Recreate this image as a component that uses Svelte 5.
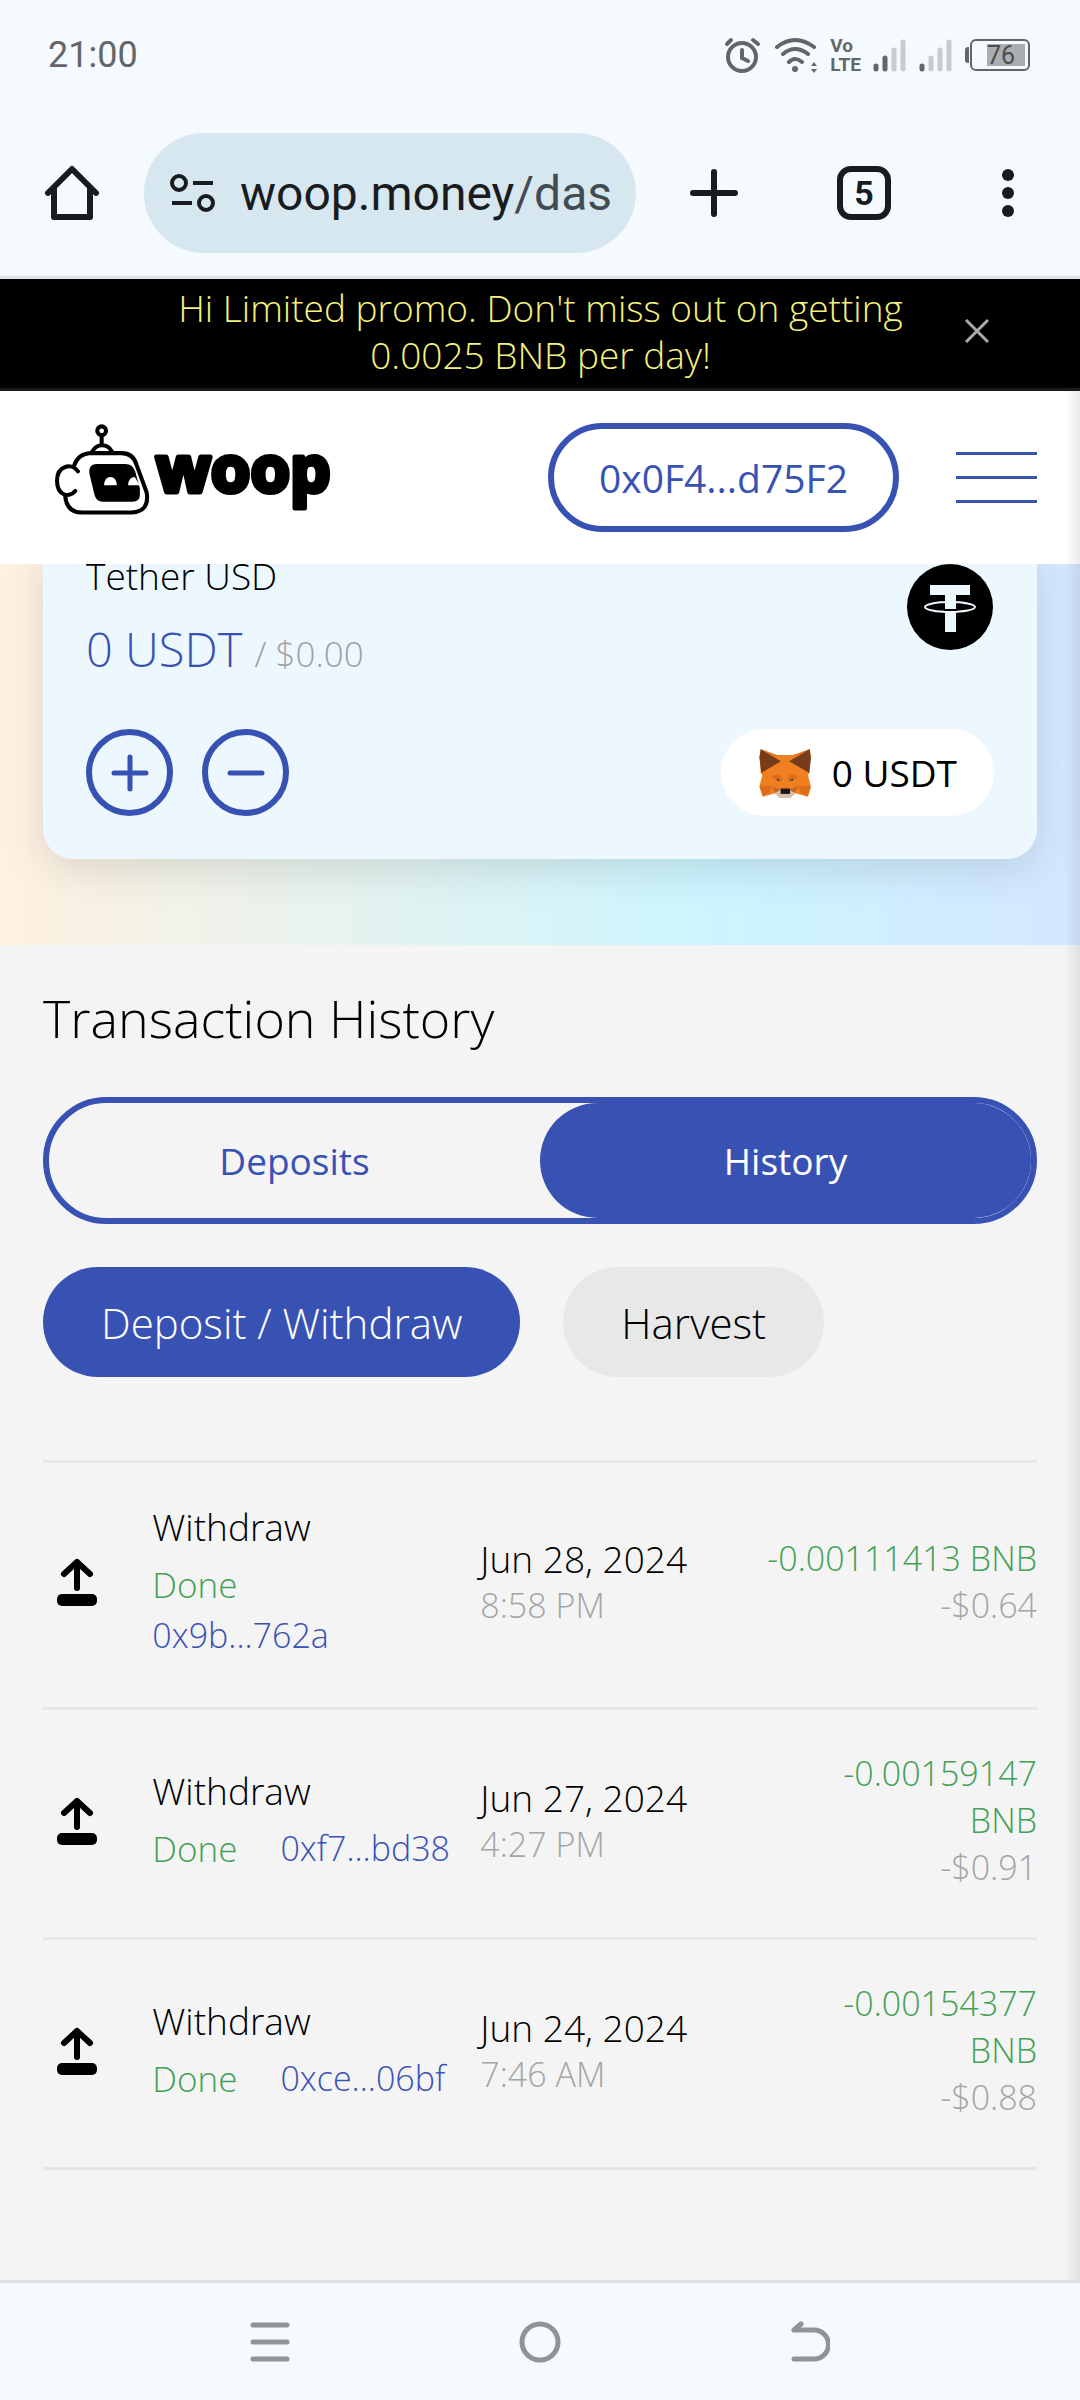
<script>
  let promoVisible = true;
  let view = 'History';
  let filter = 'Deposit / Withdraw';

  const views = ['Deposits', 'History'];
  const filters = ['Deposit / Withdraw', 'Harvest'];

  // stackedHash / stackedUnit put the second part on its own line
  const transactions = [
    { hash: '0x9b...762a', date: 'Jun 28, 2024', time: '8:58 PM', amount: '-0.00111413', usd: '-$0.64', stackedHash: true, stackedUnit: false },
    { hash: '0xf7...bd38', date: 'Jun 27, 2024', time: '4:27 PM', amount: '-0.00159147', usd: '-$0.91', stackedHash: false, stackedUnit: true },
    { hash: '0xce...06bf', date: 'Jun 24, 2024', time: '7:46 AM', amount: '-0.00154377', usd: '-$0.88', stackedHash: false, stackedUnit: true }
  ];
</script>

<div class="screen">
  <div class="status-bar">
    <span class="clock">21:00</span>
    <div class="status-icons">
      <svg width="38" height="38" viewBox="0 0 38 38" fill="none" stroke="#636669" stroke-width="4" stroke-linecap="round">
        <circle cx="18" cy="21" r="14" />
        <path d="M18 14v8l6 3M3 8l4-4M29 4l5 4" />
      </svg>
      <svg width="44" height="38" viewBox="0 0 44 38" fill="none" stroke="#636669" stroke-width="4" stroke-linecap="round">
        <path d="M3 11q18-14 37 0M9 18q12-10 25 0M15 26q6-6 13 0" />
        <circle cx="21" cy="33" r="3" fill="#636669" stroke="none" />
        <path d="M37 30l3-4 3 4zM37 33l3 4 3-4z" fill="#636669" stroke="none" />
      </svg>
      <div class="volte"><span>Vo</span><span>LTE</span></div>
      <svg width="34" height="36" viewBox="0 0 34 36" stroke="#636669" stroke-width="5" stroke-linecap="round">
        <path d="M3 29v3M12 21v11" />
        <path d="M21 13v19M30 5v27" stroke="#c9cccf" />
      </svg>
      <svg width="34" height="36" viewBox="0 0 34 36" stroke="#636669" stroke-width="5" stroke-linecap="round">
        <path d="M3 29v3" />
        <path d="M12 21v11M21 13v19M30 5v27" stroke="#c9cccf" />
      </svg>
      <div class="battery">
        <i class="nub"></i>
        <div class="cell"><span class="charge">76</span></div>
      </div>
    </div>
  </div>

  <div class="browser-bar">
    <button class="tool" aria-label="Home">
      <svg width="56" height="56" viewBox="0 0 56 56" fill="none" stroke="#181c1f" stroke-width="6" stroke-linecap="round" stroke-linejoin="round">
        <path d="M4 28L28 4l24 24M10 24v28h36V24" />
      </svg>
    </button>
    <button class="address">
      <svg width="46" height="42" viewBox="0 0 46 42" fill="none" stroke="#181c1f" stroke-width="4">
        <circle cx="9" cy="11" r="7" />
        <path d="M23 11h20M2 31h20" />
        <circle cx="36" cy="31" r="7" />
      </svg>
      <span>woop.money<span class="path">/das</span></span>
    </button>
    <button class="tool new-tab" aria-label="New tab">
      <svg width="48" height="48" viewBox="0 0 48 48" stroke="#181c1f" stroke-width="6" stroke-linecap="round">
        <path d="M24 3v42M3 24h42" />
      </svg>
    </button>
    <button class="tool" aria-label="Open tabs"><span class="tab-count">5</span></button>
    <button class="tool" aria-label="Menu">
      <svg width="12" height="48" viewBox="0 0 12 48" fill="#181c1f">
        <circle cx="6" cy="6" r="6" /><circle cx="6" cy="24" r="6" /><circle cx="6" cy="42" r="6" />
      </svg>
    </button>
  </div>

  {#if promoVisible}
    <div class="promo">
      <p>Hi Limited promo. Don't miss out on getting 0.0025 BNB per day!</p>
      <button class="close" aria-label="Close" on:click={() => (promoVisible = false)}>
        <svg width="24" height="24" viewBox="0 0 24 24" stroke="#a8aaac" stroke-width="3"><path d="M1 1l22 22M23 1L1 23" /></svg>
      </button>
    </div>
  {/if}

  <div class="page">
    <header>
      <a class="logo" href="#home" aria-label="woop">
        <svg width="96" height="96" viewBox="30 20 284 284" fill="none" stroke="#000" stroke-width="12" stroke-linecap="round" stroke-linejoin="round">
          <circle cx="168" cy="46" r="13" />
          <path d="M168 60v28M140 108q10-19 29-19t30 19" />
          <path d="M87 148q12-34 48-36h92q34 0 44 34l30 82q10 56-44 60H110q-46 0-50-50" />
          <path d="M98 166c-18-26-62-18-62 28 0 44 36 52 54 30" />
          <path d="M152 144h86q22 0 29 22l14 50v20q0 20-22 20h-88q-18 0-24-20l-15-62q-4-30 20-30z" fill="#000" stroke="none" />
          <path d="M175 207q2-24 19-24t19 24zM246 207q2-24 20-24l12 20 5 4z" fill="#fff" stroke="none" />
        </svg>
        <svg class="wordmark" width="184" height="96" viewBox="0 0 184 96">
          <text x="5" y="70">woop</text>
        </svg>
      </a>
      <button class="wallet">0x0F4...d75F2</button>
      <button class="hamburger" aria-label="Open menu"><i></i><i></i><i></i></button>
    </header>

    <section class="vault">
      <div class="card">
        <div class="card-top">
          <div>
            <div class="token-name">Tether USD</div>
            <div class="balance">0 USDT <span>/ $0.00</span></div>
          </div>
          <svg class="token-logo" width="87" height="87" viewBox="0 0 87 87">
            <circle cx="43" cy="43" r="43" />
            <path d="M23 21h40v10H49v37H38V31H23z" fill="#edf8fe" />
            <ellipse cx="43" cy="43" rx="25" ry="5" fill="none" stroke="#edf8fe" stroke-width="2" />
            <path d="M37 45h13v2H37z" />
          </svg>
        </div>
        <div class="card-actions">
          <button class="round" aria-label="Deposit">
            <svg width="38" height="38" viewBox="0 0 38 38" stroke="#3852b4" stroke-width="5" stroke-linecap="round"><path d="M19 3v32M3 19h32" /></svg>
          </button>
          <button class="round" aria-label="Withdraw">
            <svg width="38" height="38" viewBox="0 0 38 38" stroke="#3852b4" stroke-width="5" stroke-linecap="round"><path d="M3 19h32" /></svg>
          </button>
          <button class="metamask">
            <svg width="54" height="50" viewBox="20 24 160 148">
              <path d="M28 28l47 17h50l48-17 3 22-4 48-4 6 9 36-9 28-38-10-15 14H85l-15-14-36 10-10-29 9-35-5-6-3-48z" fill="#f0801f" />
              <path d="M28 27l60 36-58 35-6-46z" fill="#773d1a" />
              <path d="M173 27l-61 36 60 35 5-46z" fill="#773d1a" />
              <path d="M28 27l47 18-10 4zM173 27l-48 18 10 4z" fill="#e8762b" />
              <path d="M62 106l25-4 5 18-26-5zM138 106l-25-4-5 18 26-5zM25 136h35l-6 22-20 8zM175 136h-35l7 22 20 8z" fill="#dd6d1e" />
              <path d="M60 136l28 12 2 12-20-6zM141 136l-29 12-2 12 20-6z" fill="#cc6228" />
              <path d="M74 114l14 6-10 2zM126 114l-14 6 10 2z" fill="#2f343b" />
              <path d="M70 158l18-11h24l18 11-15 14H85z" fill="#d5bfb2" />
              <path d="M87 144h28v16H87z" fill="#1b1a1a" />
            </svg>
            0 USDT
          </button>
        </div>
      </div>
    </section>

    <main>
      <h2>Transaction History</h2>

      <div class="switch">
        {#each views as name}
          <button class:active={view === name} on:click={() => (view = name)}>{name}</button>
        {/each}
      </div>

      <div class="filters">
        {#each filters as name}
          <button class:active={filter === name} on:click={() => (filter = name)}>{name}</button>
        {/each}
      </div>

      <table>
        <tbody>
          {#each transactions as tx}
            <tr>
              <td class="icon-cell">
                <svg width="42" height="48" viewBox="0 0 42 48" fill="none" stroke="#000" stroke-width="6" stroke-linecap="round" stroke-linejoin="round">
                  <path d="M21 30V4M8 16L21 4l13 12" />
                  <rect x="1" y="36" width="40" height="12" rx="5" fill="#000" stroke="none" />
                </svg>
              </td>
              <td class="type-cell">
                <div>Withdraw</div>
                <div class="state" class:stacked={tx.stackedHash}>
                  <span class="done">Done</span>
                  <a href="#{tx.hash}">{tx.hash}</a>
                </div>
              </td>
              <td class="date-cell">
                <div>{tx.date}</div>
                <div class="muted">{tx.time}</div>
              </td>
              <td class="amount-cell">
                <div class="amount" class:stacked={tx.stackedUnit}><span>{tx.amount}</span> <span>BNB</span></div>
                <div class="muted">{tx.usd}</div>
              </td>
            </tr>
          {/each}
        </tbody>
      </table>
    </main>
  </div>

  <nav class="system-nav">
    <button aria-label="Recent apps">
      <svg width="40" height="40" viewBox="0 0 40 40" stroke="#8f9497" stroke-width="5" stroke-linecap="round"><path d="M3 3h34M3 20h34M3 37h34" /></svg>
    </button>
    <button aria-label="Home screen">
      <svg width="42" height="42" viewBox="0 0 42 42" fill="none" stroke="#8f9497" stroke-width="5"><circle cx="21" cy="21" r="18" /></svg>
    </button>
    <button aria-label="Back">
      <svg width="40" height="42" viewBox="0 0 40 42" fill="none" stroke="#8f9497" stroke-width="5" stroke-linecap="round" stroke-linejoin="round"><path d="M11 3L4 9h20a14 14 0 0 1 0 29H4" /></svg>
    </button>
  </nav>
</div>

<style>
  :global(body) {
    background: #f4f4f4;
  }

  .screen {
    display: flex;
    flex-direction: column;
    min-height: 100vh;
    font-family: 'Open Sans', 'Noto Sans', sans-serif;
    font-size: 37px;
    font-weight: 350;
    line-height: 47px;
    color: #000;
  }

  button {
    display: flex;
    align-items: center;
    justify-content: center;
    margin: 0;
    padding: 0;
    border: none;
    background: none;
    font: inherit;
    color: inherit;
    cursor: pointer;
  }

  svg {
    display: block;
    flex: none;
  }

  a {
    color: #3852b4;
    text-decoration: none;
  }

  /* phone and browser bars */
  .status-bar {
    display: flex;
    align-items: center;
    justify-content: space-between;
    height: 110px;
    padding: 0 50px 0 48px;
    background: #f5faff;
    font-family: Roboto, sans-serif;
    font-size: 36px;
    font-weight: 400;
    color: #636669;
  }

  .status-icons {
    display: flex;
    align-items: center;
    gap: 12px;
  }

  .volte {
    display: flex;
    flex-direction: column;
    font-size: 19px;
    font-weight: 700;
    line-height: 19px;
  }

  .battery {
    display: flex;
    align-items: center;
    gap: 1px;
  }

  .nub {
    width: 4px;
    height: 16px;
    border-radius: 3px 0 0 3px;
    background: #636669;
  }

  .cell {
    display: flex;
    justify-content: flex-end;
    box-sizing: border-box;
    width: 60px;
    height: 32px;
    padding: 3px;
    border: 2px solid #636669;
    border-radius: 6px;
  }

  .charge {
    width: 38px;
    background: #abaeb1;
    font-size: 25px;
    line-height: 23px;
    color: #4a4d50;
  }

  .browser-bar {
    display: flex;
    align-items: center;
    height: 166px;
    border-bottom: 3px solid #dde3e6;
    background: #f5faff;
  }

  .tool {
    flex: none;
    width: 144px;
    height: 144px;
  }

  .new-tab {
    width: 156px;
  }

  .address {
    flex: 1;
    justify-content: flex-start;
    gap: 24px;
    height: 120px;
    padding: 0 16px 0 26px;
    border-radius: 60px;
    background: #d7e7ef;
    font-family: Roboto, sans-serif;
    font-size: 48px;
    font-weight: 400;
    color: #181c1f;
  }

  .path {
    color: #434b52;
  }

  .tab-count {
    box-sizing: border-box;
    width: 54px;
    height: 54px;
    border: 6px solid #181c1f;
    border-radius: 14px;
    font-family: Roboto, sans-serif;
    font-size: 34px;
    font-weight: 700;
    line-height: 42px;
    color: #181c1f;
  }

  /* promo banner */
  .promo {
    display: flex;
    align-items: center;
    padding: 5px 91px 10px 170px;
    border-bottom: 3px solid #1a1a1e;
    background: #000;
  }

  .promo p {
    flex: 1;
    margin: 0;
    padding: 0 54px 0 0;
    text-align: center;
    color: #f5f27c;
  }

  /* page */
  .page {
    position: relative;
    flex: 1;
    background: #f4f4f4;
  }

  /* edge shadow of the closed side menu */
  .page::after {
    content: '';
    position: absolute;
    top: 0;
    right: 0;
    bottom: 0;
    width: 16px;
    background: linear-gradient(90deg, rgba(0, 0, 0, 0), rgba(0, 0, 0, 0.08));
    pointer-events: none;
    z-index: 2;
  }

  header {
    position: relative;
    z-index: 1;
    display: flex;
    align-items: center;
    height: 173px;
    padding: 0 43px 0 55px;
    background: #fff;
  }

  .logo {
    display: flex;
    align-items: center;
    margin-right: auto;
    padding-bottom: 16px;
  }

  .wordmark text {
    font-size: 64px;
    font-weight: 700;
    stroke: #000;
    stroke-width: 5px;
    stroke-linejoin: round;
  }

  .wallet {
    height: 109px;
    padding: 0 45px;
    border: 6px solid #3852b4;
    border-radius: 55px;
    font-size: 39px;
    font-weight: 400;
    color: #3852b4;
    box-sizing: border-box;
  }

  .hamburger {
    flex-direction: column;
    gap: 21px;
    width: 81px;
    margin-left: 57px;
  }

  .hamburger i {
    width: 100%;
    height: 3px;
    background: #3852b4;
  }

  .vault {
    padding: 0 43px 86px;
    background: linear-gradient(90deg, #fff1e0, #ccf5ff 65%, #d4e7ff);
  }

  /* slides a little under the header */
  .card {
    display: flex;
    flex-direction: column;
    gap: 45px;
    margin-top: -12px;
    padding: 0 43px 43px;
    border-radius: 0 0 30px 30px;
    background: #edf8fe;
    box-shadow: 0 10px 44px rgba(0, 0, 0, 0.12);
  }

  .card-top,
  .card-actions {
    display: flex;
  }

  .card-top {
    justify-content: space-between;
  }

  .token-logo {
    margin-top: 12px;
  }

  .balance {
    margin-top: 20px;
    font-size: 47px;
    line-height: 60px;
    color: #3852b4;
  }

  .balance span {
    font-size: 35px;
    color: #9da1a4;
  }

  .card-actions {
    gap: 29px;
  }

  .round {
    width: 87px;
    height: 87px;
    border: 6px solid #3852b4;
    border-radius: 50%;
    box-sizing: border-box;
  }

  .metamask {
    gap: 20px;
    height: 87px;
    margin-left: auto;
    padding: 0 37px;
    border-radius: 44px;
    background: #fff;
    font-weight: 500;
  }

  main {
    padding: 43px;
  }

  h2 {
    margin: 0 0 49px;
    font-size: 52px;
    font-weight: 350;
    line-height: 60px;
  }

  .switch {
    display: flex;
    border: 6px solid #3852b4;
    border-radius: 64px;
  }

  .switch button {
    flex: 1;
    height: 115px;
    border-radius: 58px;
    font-weight: 400;
    color: #3852b4;
  }

  .filters {
    display: flex;
    gap: 43px;
    margin: 43px 0 83px;
  }

  .filters button {
    height: 110px;
    padding: 0 58px;
    border-radius: 55px;
    background: #e8e8e8;
    font-size: 42px;
  }

  .switch .active,
  .filters .active {
    background: #3852b4;
    color: #fff;
  }

  table {
    width: 100%;
    table-layout: fixed;
    border-collapse: collapse;
  }

  tr {
    border-top: 3px solid #e6e6e6;
    border-bottom: 3px solid #e6e6e6;
  }

  td {
    padding: 40px 0 46px;
    vertical-align: middle;
  }

  .icon-cell {
    width: 11%;
    padding-left: 13px;
    box-sizing: border-box;
  }

  .type-cell {
    width: 33%;
  }

  .date-cell {
    width: 26%;
  }

  .amount-cell {
    text-align: right;
  }

  .state {
    display: flex;
    gap: 0 43px;
    margin-top: 9px;
    font-size: 35px;
    line-height: 51px;
  }

  .state a {
    font-size: 34px;
  }

  .stacked {
    display: flex;
    flex-direction: column;
  }

  .done,
  .amount {
    color: #43a057;
  }

  .amount {
    font-size: 34px;
  }

  .muted {
    font-size: 34px;
    color: #a3a5a6;
  }

  /* phone navigation */
  .system-nav {
    display: flex;
    justify-content: space-evenly;
    padding: 0 50px;
    border-top: 3px solid #dde3e6;
    background: #f5faff;
  }

  .system-nav button {
    width: 100px;
    height: 117px;
  }
</style>
